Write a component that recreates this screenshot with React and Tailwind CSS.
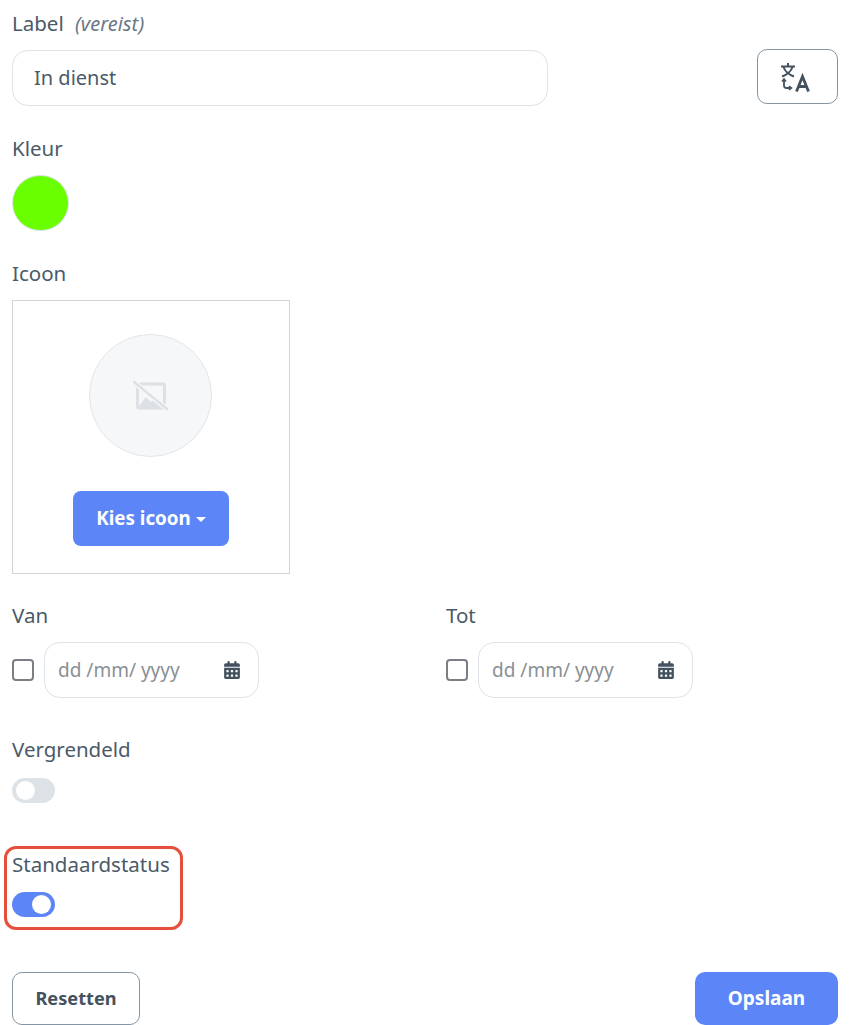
import { FaCalendarDays } from 'react-icons/fa6';

const FieldLabel = ({ children, className = '' }) => (
  <label className={`block text-[20.5px] leading-[24px] text-[#4a5a68] ${className}`}>{children}</label>
);

const TranslateIcon = () => (
  <svg width="30" height="30" viewBox="0 0 30 30" fill="none" stroke="#44525f" className="-ml-[6px]">
    {/* character on top */}
    <path d="M1 4.5h14M8 1v3.5" strokeWidth="2" />
    <path d="M3.5 5c1.5 4.5 5 7.5 10.5 9.5M12.5 5c-1.5 4.5-5 7.5-10.5 9.5" strokeWidth="2" />
    {/* small turn arrow */}
    <path d="M4 17v6.5c0 1.5 1 2.5 2.5 2.5H10" strokeWidth="1.8" />
    <path d="M2 19.5L4 17l2 2.5M9 24l2.5 2L9 28" strokeWidth="1.6" />
    {/* the A */}
    <path d="M16.5 29.5L22.5 14.5L28.5 29.5M18.5 24.5h8" strokeWidth="2.8" />
  </svg>
);

const NoImageIcon = () => (
  <svg width="36" height="30" viewBox="0 0 36 30">
    <rect x="4.5" y="3" width="27" height="24" rx="1.5" fill="none" stroke="#dce1e6" strokeWidth="3" />
    <path d="M5 26l8-10 5 5 3-3 10 9z" fill="#dce1e6" />
    <path d="M2 2l32 26" stroke="#f6f7f9" strokeWidth="5" />
    <path d="M1 1l33 27" stroke="#dce1e6" strokeWidth="2.4" strokeLinecap="round" />
  </svg>
);

const DateField = ({ label, className = '' }) => (
  <div className={className}>
    <FieldLabel>{label}</FieldLabel>
    <div className="flex items-center mt-[15px]">
      <span className="w-[22px] h-[22px] rounded-[4px] border-2 border-[#7b7f83] bg-white" />
      <div className="ml-[10px] w-[215px] h-[56px] rounded-[16px] border border-[#dde3e9] flex items-center pl-[13px] pr-[17px] justify-between">
        <span className="text-[19px] text-[#8a8f94]">dd /mm/ yyyy</span>
        <FaCalendarDays className="text-[#44525f] text-[18px]" />
      </div>
    </div>
  </div>
);

const Toggle = ({ on }) => (
  <div className={`w-[43px] h-[25px] rounded-full flex items-center px-[4px] ${on ? 'bg-[#5c86f7] justify-end' : 'bg-[#dde2e7] justify-start'}`}>
    <span className="w-[19px] h-[19px] rounded-full bg-white" />
  </div>
);

export default function App() {
  return (
    <div className="relative w-[849px] h-[1025px] overflow-hidden bg-white px-[12px] pt-[11px] font-['Noto_Sans','Open_Sans',sans-serif]">
      <FieldLabel>
        Label <em className="ml-[6px] text-[20px] leading-none text-[#6b7885]">(vereist)</em>
      </FieldLabel>
      <div className="flex items-start justify-between mt-[15px] w-[826px]">
        <div className="w-[536px] h-[56px] rounded-[16px] border border-[#dde3e9] flex items-center pl-[21px] text-[20px] text-[#4a5a68]">
          In dienst
        </div>
        <button className="w-[81px] h-[55px] -mt-[1px] rounded-[10px] border border-[#8494a3] flex items-center justify-center bg-white">
          <TranslateIcon />
        </button>
      </div>

      <FieldLabel className="mt-[30px]">Kleur</FieldLabel>
      <div className="mt-[15px] w-[57px] h-[56px] rounded-full bg-[#6aff00] border border-[#dde3e9]" />

      <FieldLabel className="mt-[30px]">Icoon</FieldLabel>
      <div className="mt-[15px] w-[278px] h-[274px] border border-[#cfd5da] flex flex-col items-center pt-[33px]">
        <div className="w-[123px] h-[123px] -ml-[1px] rounded-full bg-[#f6f7f9] border border-[#e2e6ea] flex items-center justify-center">
          <NoImageIcon />
        </div>
        <button className="mt-[34px] w-[156px] h-[55px] rounded-[8px] bg-[#5c86f7] text-white font-bold text-[18.8px] flex items-center justify-center">
          Kies icoon
          <span className="ml-[5px] mt-[2px] border-x-[5px] border-x-transparent border-t-[5px] border-t-white" />
        </button>
      </div>

      <div className="flex mt-[29px]">
        <DateField label="Van" className="w-[434px]" />
        <DateField label="Tot" />
      </div>

      <FieldLabel className="mt-[39px]">Vergrendeld</FieldLabel>
      <div className="mt-[17px]"><Toggle /></div>

      <FieldLabel className="mt-[49px]">Standaardstatus</FieldLabel>
      <div className="mt-[16px]"><Toggle on /></div>

      <div className="flex justify-between w-[826px] mt-[55px]">
        <button className="w-[128px] h-[53px] rounded-[10px] border border-[#8494a3] bg-white text-[#44525f] font-bold text-[18.2px]">
          Resetten
        </button>
        <button className="w-[143px] h-[53px] rounded-[10px] bg-[#5c86f7] text-white font-bold text-[19px]">
          Opslaan
        </button>
      </div>

      {/* annotation round the default status field */}
      <div className="absolute left-[4px] top-[846px] w-[179px] h-[84px] rounded-[12px] border-[3.5px] border-[#e5503c] pointer-events-none" />
    </div>
  );
}
